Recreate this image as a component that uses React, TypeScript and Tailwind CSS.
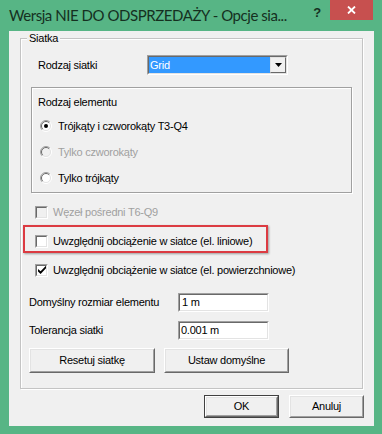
import React from "react";

function Radio({ checked = false, disabled = false }: { checked?: boolean; disabled?: boolean }) {
  return (
    <svg width="12" height="12" viewBox="0 0 12 12" className="shrink-0">
      <circle cx="6" cy="6" r="5" fill={disabled ? "#f0f0f0" : "#ffffff"} />
      <path d="M2.1 9.9 A5.5 5.5 0 0 1 9.9 2.1" stroke="#a0a0a0" strokeWidth="1" fill="none" />
      <path d="M9.9 2.1 A5.5 5.5 0 0 1 2.1 9.9" stroke="#ffffff" strokeWidth="1" fill="none" />
      <path d="M2.8 9.2 A4.5 4.5 0 0 1 9.2 2.8" stroke="#696969" strokeWidth="1" fill="none" />
      <path d="M9.2 2.8 A4.5 4.5 0 0 1 2.8 9.2" stroke="#e3e3e3" strokeWidth="1" fill="none" />
      {checked && <circle cx="6" cy="6" r="2" fill="#000000" />}
    </svg>
  );
}

function Check({ checked = false, disabled = false }: { checked?: boolean; disabled?: boolean }) {
  return (
    <div className="w-[13px] h-[13px] shrink-0 border border-t-[#a0a0a0] border-l-[#a0a0a0] border-b-white border-r-white">
      <div
        className={`w-full h-full border border-t-[#696969] border-l-[#696969] border-b-[#e3e3e3] border-r-[#e3e3e3] ${
          disabled ? "bg-[#f0f0f0]" : "bg-white"
        } flex items-center justify-center`}
      >
        {checked && (
          <svg width="8" height="8" viewBox="0 0 8 8">
            <path d="M0 3 L0 5.5 L2.6 8 L8 2.2 L8 -0.3 L2.6 5.3 Z" fill="#000" />
          </svg>
        )}
      </div>
    </div>
  );
}

function Sunken({ className = "", children }: { className?: string; children?: React.ReactNode }) {
  return (
    <div className={`border border-t-[#a0a0a0] border-l-[#a0a0a0] border-b-white border-r-white ${className}`}>
      <div className="w-full h-full border border-t-[#696969] border-l-[#696969] border-b-[#e3e3e3] border-r-[#e3e3e3] bg-white flex">
        {children}
      </div>
    </div>
  );
}

function Btn({ className = "", children, def = false }: { className?: string; children?: React.ReactNode; def?: boolean }) {
  const inner = (
    <div className="w-full h-full border border-t-white border-l-white border-b-[#696969] border-r-[#696969]">
      <div className="w-full h-full border border-t-[#e3e3e3] border-l-[#e3e3e3] border-b-[#a0a0a0] border-r-[#a0a0a0] bg-[#f0f0f0] flex items-center justify-center text-black">
        {children}
      </div>
    </div>
  );
  if (def) return <div className={`border border-[#404040] ${className}`}>{inner}</div>;
  return <div className={className}>{inner}</div>;
}

export default function App() {
  return (
    <div className="w-[382px] h-[434px] bg-[#57b585] flex flex-col overflow-hidden font-['Liberation_Sans',Arial,sans-serif] text-[11px] tracking-[-0.25px] text-black">
      {/* title bar */}
      <div className="h-[31px] flex items-start shrink-0">
        <div className="flex-1 min-w-0 pl-[9px] pt-[5px] font-['Lato','Noto_Sans',sans-serif] text-[15px] leading-[20px] tracking-[-0.45px] text-[#15301f] whitespace-nowrap">
          Wersja NIE DO ODSPRZEDAŻY - Opcje sia...
        </div>
        <div className="w-[26px] shrink-0 pt-[5px] text-center font-['Liberation_Sans',sans-serif] font-bold text-[13px] leading-[16px] text-[#15301f]">
          ?
        </div>
        <div className="w-[43px] h-[20px] shrink-0 mr-[9px] bg-[#c7504f] flex items-center justify-center">
          <svg width="9" height="8" viewBox="0 0 9 8">
            <path d="M1 0.5 L8 7.5 M8 0.5 L1 7.5" stroke="#ffffff" strokeWidth="1.8" />
          </svg>
        </div>
      </div>

      {/* client area */}
      <div className="ml-[9px] mr-[8px] h-[395px] bg-[#f0f0f0] flex flex-col">
        {/* group box Siatka */}
        <div className="relative mt-[7px] ml-[11px] w-[343px] h-[351px] border border-[#c4c4c4] shadow-[inset_1px_1px_0_#ffffff,1px_1px_0_#ffffff] flex flex-col">
          <span className="absolute left-[6px] top-[-8px] px-[2px] bg-[#f0f0f0] leading-[14px]">Siatka</span>

          {/* Rodzaj siatki */}
          <div className="mt-[16px] h-[19px] flex items-center pl-[17px]">
            <div className="w-[109px] leading-[14px]">Rodzaj siatki</div>
            <div className="w-[141px] h-[20px] border border-t-[#a0a0a0] border-l-[#a0a0a0] border-b-white border-r-white">
              <div className="w-full h-full border border-t-[#696969] border-l-[#696969] border-b-[#e3e3e3] border-r-[#e3e3e3] bg-white flex">
                <div className="flex-1 bg-[#3399ff] text-white pl-[1px] flex items-center leading-[14px]">Grid</div>
                <div className="w-[16px] h-full border border-t-[#e3e3e3] border-l-[#e3e3e3] border-b-[#696969] border-r-[#696969] bg-[#f0f0f0] flex items-center justify-center">
                  <svg width="7" height="4" viewBox="0 0 7 4">
                    <path d="M0 0 L7 0 L3.5 4 Z" fill="#000" />
                  </svg>
                </div>
              </div>
            </div>
          </div>

          {/* Rodzaj elementu frame */}
          <div className="mt-[13px] mx-[10px] h-[106px] border border-[#a0a0a0] shadow-[inset_1px_1px_0_#ffffff,1px_1px_0_#ffffff] flex flex-col pt-[3px] pl-[6px]">
            <div className="h-[22px] flex items-center leading-[14px]">Rodzaj elementu</div>
            <div className="h-[26px] flex items-center gap-[6px] pl-[2px]">
              <Radio checked />
              <span className="leading-[14px]">Trójkąty i czworokąty T3-Q4</span>
            </div>
            <div className="h-[26px] flex items-center gap-[6px] pl-[2px] text-[#a0a0a0]">
              <Radio disabled />
              <span className="leading-[14px]">Tylko czworokąty</span>
            </div>
            <div className="h-[26px] flex items-center gap-[6px] pl-[2px]">
              <Radio />
              <span className="leading-[14px]">Tylko trójkąty</span>
            </div>
          </div>

          {/* Węzeł pośredni */}
          <div className="mt-[6px] h-[26px] flex items-center gap-[5px] pl-[14px] text-[#a0a0a0]">
            <Check disabled />
            <span className="leading-[14px]">Węzeł pośredni T6-Q9</span>
          </div>

          {/* highlighted row */}
          <div className="ml-[2px] w-[245px] h-[28px] border-2 border-[#dc3b42] shadow-[1px_1px_2px_rgba(0,0,0,0.35)] flex items-center gap-[5px] pl-[10px] pt-[4px]">
            <Check />
            <span className="leading-[14px]">Uwzględnij obciążenie w siatce (el. liniowe)</span>
          </div>

          <div className="mt-[4px] h-[26px] flex items-center gap-[5px] pl-[14px]">
            <Check checked />
            <span className="leading-[14px]">Uwzględnij obciążenie w siatce (el. powierzchniowe)</span>
          </div>

          {/* text fields */}
          <div className="mt-[10px] h-[18px] flex items-center pl-[8px]">
            <div className="w-[149px] leading-[14px]">Domyślny rozmiar elementu</div>
            <Sunken className="w-[91px] h-[19px]">
              <div className="pl-[2px] flex items-center leading-[14px]">1 m</div>
            </Sunken>
          </div>
          <div className="mt-[10px] h-[18px] flex items-center pl-[8px]">
            <div className="w-[149px] leading-[14px]">Tolerancja siatki</div>
            <Sunken className="w-[91px] h-[19px]">
              <div className="pl-[1px] flex items-center leading-[14px]">0.001 m</div>
            </Sunken>
          </div>

          {/* buttons */}
          <div className="mt-[9px] h-[25px] flex pl-[8px] gap-[9px]">
            <Btn className="w-[126px] h-[25px]">Resetuj siatkę</Btn>
            <Btn className="w-[125px] h-[25px]">Ustaw domyślne</Btn>
          </div>
        </div>

        {/* bottom buttons */}
        <div className="mt-[6px] flex justify-end gap-[10px] pr-[10px]">
          <Btn def className="w-[75px] h-[23px]">OK</Btn>
          <Btn className="w-[75px] h-[23px]">Anuluj</Btn>
        </div>
      </div>
    </div>
  );
}
